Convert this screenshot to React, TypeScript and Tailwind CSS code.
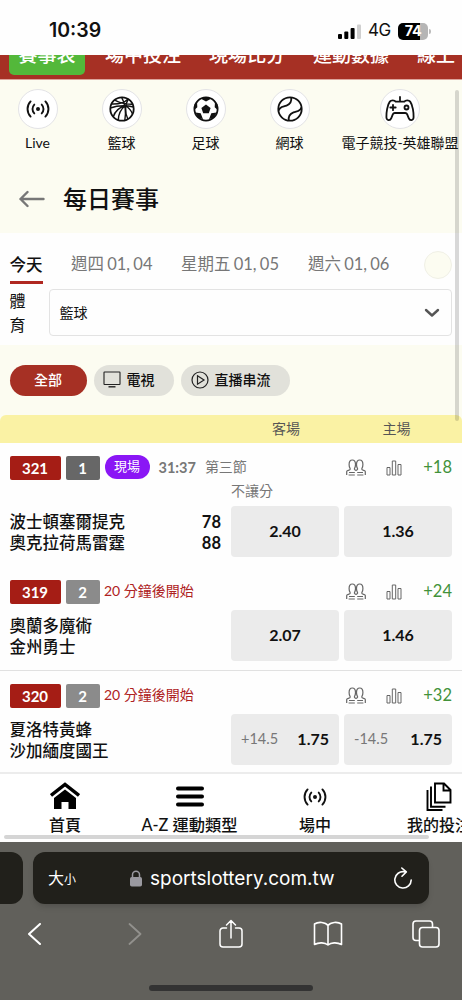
import React from "react";

type Game = {
  id: string;
  count: string;
  live?: boolean;
  status: string;
  period?: string;
  market?: string;
  teams: string[];
  scores?: string[];
  more: string;
  odds: { line?: string; value: string }[];
};

const games: Game[] = [
  {
    id: "321",
    count: "1",
    live: true,
    status: "31:37",
    period: "第三節",
    market: "不讓分",
    teams: ["波士頓塞爾提克", "奧克拉荷馬雷霆"],
    scores: ["78", "88"],
    more: "+18",
    odds: [{ value: "2.40" }, { value: "1.36" }],
  },
  {
    id: "319",
    count: "2",
    status: "20 分鐘後開始",
    teams: ["奧蘭多魔術", "金州勇士"],
    more: "+24",
    odds: [{ value: "2.07" }, { value: "1.46" }],
  },
  {
    id: "320",
    count: "2",
    status: "20 分鐘後開始",
    teams: ["夏洛特黃蜂", "沙加緬度國王"],
    more: "+32",
    odds: [
      { line: "+14.5", value: "1.75" },
      { line: "-14.5", value: "1.75" },
    ],
  },
];

function LiveIcon({ size = 24 }: { size?: number }) {
  return (
    <svg width={size} height={size} viewBox="0 0 24 24" fill="none" stroke="currentColor" strokeWidth="1.9" strokeLinecap="round">
      <circle cx="12" cy="12" r="2" fill="currentColor" stroke="none" />
      <path d="M8.300 7.600a6.300 6.300 0 0 0 0 8.800M15.700 7.600a6.300 6.300 0 0 1 0 8.800M4.600 4.400a11 11 0 0 0 0 15.200M19.400 4.400a11 11 0 0 1 0 15.200" />
    </svg>
  );
}

function BasketballIcon() {
  return (
    <svg width="26" height="26" viewBox="0 0 26 26" fill="none" stroke="currentColor" strokeWidth="1.4">
      <circle cx="13" cy="13" r="11.7" strokeWidth="1.8" />
      <path d="M12.500 1.200c3.800 6.500 4.600 15.500 3.300 23.300M19.300 3c-3.300 5-3.600 14-.5 20M1.300 12c8-2.800 15-3 23.300-1M2.400 8c7 .4 13-1.300 17-5.300M5.800 4.200c5 3 12 4.200 18 4M4.300 20.800c1.800-6 6.200-9.500 12-11.300M9.300 24c.2-6 2.700-11 7-14.500M16.300 9.500c3.500 2.200 6 5.200 7.200 8.500" />
    </svg>
  );
}

function SoccerIcon() {
  return (
    <svg width="26" height="26" viewBox="0 0 26 26" fill="none" stroke="currentColor" strokeWidth="1.8">
      <circle cx="13" cy="13" r="11.600" />
      <path fill="currentColor" stroke="none" d="M13 8.600l4.600 3.300-1.800 5.300h-5.600l-1.800-5.300z" />
      <path fill="currentColor" stroke="none" d="M7.500 2.600L13 5.400l5.500-2.800L13 1zM22 5.500l-.3 5.700 3.300 3-.6-6zM23.500 16.500l-5.200.8-2.300 6 5-1.800zM4 5.500l.3 5.700-3.300 3 .6-6zM2.500 16.500l5.200.8 2.300 6-5-1.800z" />
    </svg>
  );
}

function TennisIcon() {
  return (
    <svg width="26" height="26" viewBox="0 0 26 26" fill="none" stroke="currentColor" strokeWidth="1.8">
      <circle cx="13" cy="13" r="11.7" />
      <path d="M14.200 1.400c.6 4-1 6.800-4.700 8.200-3.600 1.300-7.200 1-7.800 5M11.800 24.600c-.6-4 1-6.800 4.700-8.200 3.600-1.300 7.200-1 7.800-5" />
    </svg>
  );
}

function GamepadIcon() {
  return (
    <svg width="30" height="26" viewBox="0 0 30 26" fill="none" stroke="currentColor" strokeWidth="1.800" strokeLinecap="round" strokeLinejoin="round">
      <path d="M15 5.300V1M15 5.600h4.300c1.200-1.600 4.700-1.600 5.900 0C27.700 9 28.800 17 28.600 21.300c-.2 3.500-3.800 3.700-4.900.9l-1.500-3.800c-.4-1-1-1.400-2-1.400H9.800c-1 0-1.600.4-2 1.400l-1.500 3.800c-1.100 2.800-4.700 2.600-4.900-.9C1.200 17 2.300 9 4.800 5.600c1.200-1.600 4.700-1.600 5.900 0z" />
      <path d="M5.300 11.500h5.400M8 8.800v5.400" />
      <circle cx="21.500" cy="11.500" r="2" />
    </svg>
  );
}

function PeopleIcon() {
  return (
    <svg width="20" height="17" viewBox="0 0 20 17" fill="none" stroke="currentColor" strokeWidth="1.200">
      <path d="M.7 16v-3.500c0-1.200 3.300-1 3.500-2.400.1-.9-1.100-1.600-1.100-4.700C3.100 2.400 4.200 1 6.300 1s3.200 1.400 3.200 4.400c0 3.100-1.200 3.800-1.100 4.700.2.800.9 1.100 1.600 1.300.7-.2 1.400-.5 1.600-1.300.1-.9-1.100-1.600-1.100-4.700C10.500 2.400 11.600 1 13.700 1s3.200 1.400 3.200 4.400c0 3.100-1.200 3.800-1.100 4.700.2 1.400 3.500 1.200 3.500 2.400V16" />
      <path d="M3 13.500h5.800M2.600 16h6.200M11.200 13.500H17M11.200 16h6.200" />
    </svg>
  );
}

function StatsIcon() {
  return (
    <svg width="16" height="16" viewBox="0 0 16 16" fill="none" stroke="currentColor" strokeWidth="1">
      <path d="M1 7.500h3v7.500H1zM6.300 1h3.400v14H6.300zM12 4.500h3V15h-3z" />
    </svg>
  );
}

function StatusBar() {
  return (
    <div className="h-[55px] shrink-0 flex items-center justify-between pl-[49px] pr-[31px] pt-[7px] bg-[#fefefe]">
      <span className="font-[Inter] text-[19.500px] font-semibold">10:39</span>
      <div className="flex items-center">
        <svg width="24" height="15" viewBox="0 0 24 15">
          <rect x="0" y="10" width="4" height="5" rx="1" />
          <rect x="6.300" y="7.500" width="4" height="7.500" rx="1" />
          <rect x="12.600" y="4" width="4" height="11" rx="1" />
          <rect x="19" y="0.500" width="4" height="14.500" rx="1" fill="#cfcfcf" />
        </svg>
        <span className="font-[Inter] text-[17px] w-[22px] ml-[6px] mr-[8px] tracking-[-0.5px]">4G</span>
        <div className="w-[30px] h-[17px] rounded-[5px] bg-linear-to-r from-black from-75% to-[#b5b5b5] to-75% flex items-center justify-center font-[Inter] text-white text-[14.500px] font-bold tracking-[-0.5px]">
          74
        </div>
        <div className="w-[2px] h-[5px] rounded-r-full bg-[#bbb] ml-px" />
      </div>
    </div>
  );
}

function TopNav() {
  return (
    <div className="h-[25px] shrink-0 overflow-hidden bg-[#a63024] border-b border-[#dca49b] text-white text-[19px] font-medium whitespace-nowrap">
      <div className="flex items-start -mt-[14px] leading-[28px]">
        <div className="bg-[#53b83a] rounded-[5px] h-[34px] w-[76px] ml-[9px] text-center">賽事表</div>
        <span className="ml-[20px]">場中投注</span>
        <span className="ml-[28px]">現場比分</span>
        <span className="ml-[28px]">運動數據</span>
        <span className="ml-[28px]">線上</span>
      </div>
    </div>
  );
}

function Sport({ label, children, className }: { label: string; children: React.ReactNode; className: string }) {
  return (
    <div className={`flex flex-col items-center shrink-0 ${className}`}>
      <div className="size-10 rounded-full border border-[#e3e3e6] bg-white flex items-center justify-center">{children}</div>
      <span className="mt-[4px] text-[14px] leading-5 whitespace-nowrap">{label}</span>
    </div>
  );
}

function GameRow({ game, last }: { game: Game; last?: boolean }) {
  return (
    <div className={`pl-[9.500px] pr-[10px] pt-[13px] bg-[#fefefe] ${game.live ? "h-[124px]" : last ? "h-[101px]" : "h-[104px] border-b border-[#e1e1e1]"}`}>
      <div className="flex items-center h-6 text-[14px]">
        <span className="w-[51px] h-[24px] rounded-[2px] bg-[#a51d15] text-white text-[15px] font-bold leading-[24px] text-center">{game.id}</span>
        <span className={`w-[34px] h-[24px] ml-[5px] rounded-[2px] text-white text-[15px] font-bold leading-[24px] text-center ${game.live ? "bg-[#676767]" : "bg-[#8b8b8b]"}`}>
          {game.count}
        </span>
        {game.live ? (
          <>
            <span className="w-[45px] h-[24px] ml-[5px] -mt-[2px] rounded-full bg-[#8a16f5] text-white text-[13px] leading-[23px] text-center">現場</span>
            <span className="ml-[9px] -mt-px text-[14.500px] font-bold text-[#777]">{game.status}</span>
            <span className="ml-[9px] -mt-[4px] text-[#777]">{game.period}</span>
          </>
        ) : (
          <span className="ml-[4.500px] -mt-[4px] text-[#ae2222]">{game.status}</span>
        )}
        <div className="ml-auto -mt-px flex items-center text-[#666]">
          <PeopleIcon />
          <div className="ml-[20px]">
            <StatsIcon />
          </div>
          <span className="w-[50px] text-right text-[16.500px] text-[#42923a]">{game.more}</span>
        </div>
      </div>
      <div className="h-[20px] pl-[221.500px] text-[14px] leading-[22px] text-[#777] empty:h-0">{game.market}</div>
      <div className="flex mt-[6px]">
        <div className="w-[211.500px] mr-[10px] pt-[5.500px] font-medium text-[16.500px] leading-[21.500px]">
          {game.teams.map((team, i) => (
            <div key={team} className="flex justify-between">
              <span>{team}</span>
              {game.scores && <span className="font-bold">{game.scores[i]}</span>}
            </div>
          ))}
        </div>
        <div className="flex gap-[5px]">
          {game.odds.map((odd, i) => (
            <div
              key={i}
              className={`w-[108px] h-[51px] pb-px rounded-[4px] bg-[#ebebeb] flex items-center ${odd.line ? "justify-between px-[10px]" : "justify-center"}`}
            >
              {odd.line && <span className="text-[14.500px] text-[#777]">{odd.line}</span>}
              <span className="text-[16px] font-bold">{odd.value}</span>
            </div>
          ))}
        </div>
      </div>
    </div>
  );
}

function BottomNav() {
  return (
    <div className="relative h-[70px] shrink-0 border-t-2 border-[#ececec] bg-white overflow-hidden">
      <div className="flex text-[16px] font-medium whitespace-nowrap pt-[8px]">
        <div className="w-[130px] shrink-0 flex flex-col items-center">
          <svg width="30" height="29" viewBox="0 0 30 29">
            <path d="M1 13.500L15 2.500l14 11" fill="none" stroke="#000" strokeWidth="3.400" />
            <path d="M4 16L15 7.500 26 16v11h-7.500v-7h-7v7H4z" />
          </svg>
          <span className="leading-[28px]">首頁</span>
        </div>
        <div className="w-[119px] shrink-0 flex flex-col items-center">
          <svg width="30" height="29" viewBox="0 0 30 29" stroke="#000" strokeWidth="4" strokeLinecap="round">
            <path d="M3 6.500h24M3 14.500h24M3 22.500h24" />
          </svg>
          <span className="leading-[28px] text-[16.300px]">A-Z 運動類型</span>
        </div>
        <div className="w-[132px] shrink-0 flex flex-col items-center">
          <div className="h-[29px] flex items-center">
            <LiveIcon size={24} />
          </div>
          <span className="leading-[28px]">場中</span>
        </div>
        <div className="w-[116px] shrink-0 flex flex-col items-center">
          <svg width="26" height="29" viewBox="0 0 26 29" fill="none" stroke="#000" strokeWidth="1.900">
            <path d="M9 1.500h9l6.500 6.500v12.500H9zM17.500 1.500V8.500h7M5 4.500v20.200h14.500M1.500 8v20h15" />
          </svg>
          <span className="leading-[28px]">我的投注</span>
        </div>
      </div>
      <div className="absolute left-[4px] bottom-[3px] w-[425px] h-[4px] rounded-full bg-[#d5d5d5]" />
    </div>
  );
}

function BrowserBar() {
  return (
    <div className="h-[158px] shrink-0 bg-[#61605b] text-white overflow-hidden">
      <div className="flex gap-[10px] mt-[10px]">
        <div className="w-[23px] h-[52px] rounded-r-[12px] bg-[#21201b]" />
        <div className="w-[396px] h-[52px] rounded-[12px] bg-[#21201b] shadow-md flex items-center pl-[15px] pr-[16px]">
          <span className="text-[16px]">大</span>
          <span className="text-[12px] mt-[4px]">小</span>
          <svg className="ml-[54px]" width="12" height="17" viewBox="0 0 12 17">
            <rect x="0" y="7" width="12" height="9.500" rx="1.800" fill="#9a99a0" />
            <path d="M2.500 8V4.800a3.500 3.500 0 0 1 7 0V8" fill="none" stroke="#9a99a0" strokeWidth="1.500" />
          </svg>
          <span className="ml-[8px] mt-[2px] font-[Inter] text-[19px]">sportslottery.com.tw</span>
          <svg className="ml-auto" width="20" height="22" viewBox="0 0 20 22" fill="none" stroke="#fff" strokeWidth="1.600" strokeLinecap="round" strokeLinejoin="round">
            <path d="M11.500 4.800A8.200 8.200 0 1 0 18.200 13M8.800 1l4.500 3.900-4.300 4.300" />
          </svg>
        </div>
      </div>
      <div className="flex items-center justify-between pl-[20px] pr-[21px] mt-[14px] h-[32px]">
        <svg width="30" height="22" viewBox="0 0 30 22" fill="none" stroke="#fff" strokeWidth="2" strokeLinecap="round" strokeLinejoin="round">
          <path d="M20 1L9 11l11 10" />
        </svg>
        <svg width="30" height="22" viewBox="0 0 30 22" fill="none" stroke="#92918d" strokeWidth="1.800" strokeLinecap="round" strokeLinejoin="round">
          <path d="M11.500 1l11 10-11 10" />
        </svg>
        <svg width="30" height="30" viewBox="-3 0 30 30" fill="none" stroke="#fff" strokeWidth="1.500" strokeLinecap="round" strokeLinejoin="round">
          <path d="M7.500 9H4a3 3 0 0 0-3 3v13a3 3 0 0 0 3 3h16a3 3 0 0 0 3-3V12a3 3 0 0 0-3-3h-3.500M12 19V1.500M7.500 6L12 1.500 16.500 6" />
        </svg>
        <svg width="30" height="26" viewBox="0 0 30 26" fill="none" stroke="#fff" strokeWidth="1.600" strokeLinejoin="round">
          <path d="M15 4.500C12.500 1 5.500.300 1.500 3v20.500c4.500-2.500 10.500-2 13.500.500 3-2.500 9-3 13.500-.500V3C24.500.300 17.500 1 15 4.500zM15 4.500V24" />
        </svg>
        <svg width="30" height="28" viewBox="-1 0 30 28" fill="none" stroke="#fff" strokeWidth="1.600">
          <rect x="7.500" y="7.500" width="19.500" height="19.500" rx="3" />
          <path d="M7.500 20.500H4a3 3 0 0 1-3-3V4a3 3 0 0 1 3-3h13.500a3 3 0 0 1 3 3v3.500" />
        </svg>
      </div>
      <div className="w-[164px] h-[6px] rounded-full bg-[#333] mx-auto mt-[35px]" />
    </div>
  );
}

export default function App() {
  return (
    <div className="relative w-[462px] h-[1000px] overflow-hidden flex flex-col bg-white text-[#111] font-[Lato,'Noto_Sans_CJK_TC',sans-serif]">
      <StatusBar />
      <TopNav />
      <div className="h-[153px] shrink-0 bg-[#fcfcf1] overflow-hidden">
        <div className="flex pt-[9px]">
          <Sport label="Live" className="w-[75px]">
            <LiveIcon />
          </Sport>
          <Sport label="籃球" className="w-[93px]">
            <BasketballIcon />
          </Sport>
          <Sport label="足球" className="w-[75px]">
            <SoccerIcon />
          </Sport>
          <Sport label="網球" className="w-[93px]">
            <TennisIcon />
          </Sport>
          <Sport label="電子競技-英雄聯盟" className="w-[128px]">
            <GamepadIcon />
          </Sport>
        </div>
        <div className="flex items-center mt-[28px] pl-[19px] h-[36px]">
          <svg width="26" height="18" viewBox="0 0 26 18" fill="none" stroke="#777" strokeWidth="2.400" strokeLinecap="round" strokeLinejoin="round">
            <path d="M24.500 9H1.500M8.500 2L1.500 9l7 7" />
          </svg>
          <h1 className="ml-[18px] text-[24px] font-medium">每日賽事</h1>
        </div>
      </div>
      <div className="h-[112px] shrink-0 bg-[#fefefe] pl-[9.500px] pr-[10px]">
        <div className="flex items-center h-[51px] pt-[12px] text-[16.500px] text-[#777] whitespace-nowrap [word-spacing:-1px]">
          <div className="h-[39px] w-[33px] leading-[40px] border-b-[3px] border-[#b02821] text-[#111] font-medium">今天</div>
          <span className="ml-[28.500px]">週四 01, 04</span>
          <span className="ml-[28.500px]">星期五 01, 05</span>
          <span className="ml-[29px]">週六 01, 06</span>
          <div className="ml-auto size-7 rounded-full bg-[#fcfcf1] border border-[#f0f0e6]" />
        </div>
        <div className="flex mt-[5px]">
          <div className="w-[40px] pr-[23px] text-[16px] leading-6">體育</div>
          <div className="w-[403px] h-[47px] rounded-[4px] border border-[#e3e3e3] flex items-center justify-between pl-[9px] pr-[11px] text-[14px]">
            <span>籃球</span>
            <svg width="16" height="10" viewBox="0 0 16 10" fill="none" stroke="#555" strokeWidth="2.400" strokeLinecap="round" strokeLinejoin="round">
              <path d="M2 2l6 5.500L14 2" />
            </svg>
          </div>
        </div>
      </div>
      <div className="h-[70px] shrink-0 bg-[#fcfcf1] flex gap-[7px] px-[9.500px] pt-[20px] text-[14px] font-medium">
        <div className="w-[77px] h-[31px] pb-[2px] rounded-full bg-[#a63024] text-white flex items-center justify-center">全部</div>
        <div className="w-[80px] h-[31px] pb-[2px] rounded-full bg-[#e1e1da] flex items-center pl-[9px] gap-[6px]">
          <svg width="18" height="17" viewBox="0 0 18 17" fill="none" stroke="#222" strokeWidth="1.100">
            <rect x="1" y="1" width="16" height="12.500" rx="0.500" />
            <path d="M5.500 15.800h7" strokeWidth="1.400" />
          </svg>
          電視
        </div>
        <div className="w-[109px] h-[31px] pb-[2px] rounded-full bg-[#e1e1da] flex items-center pl-[10px] gap-[6px]">
          <svg width="18" height="18" viewBox="0 0 18 18" fill="none" stroke="#222" strokeWidth="1.200">
            <circle cx="9" cy="9" r="8" />
            <path d="M6.500 4.800L13 9l-6.500 4.200z" />
          </svg>
          直播串流
        </div>
      </div>
      <div className="h-[28px] shrink-0 bg-[#fcfcf1]">
        <div className="h-full rounded-t-[6px] bg-[#faf2a4] flex items-center pl-[231px] pb-[2px] text-[14px] text-[#555]">
          <span className="w-[110px] text-center">客場</span>
          <span className="w-[111px] text-center">主場</span>
        </div>
      </div>
      <div className="h-[329px] shrink-0 overflow-hidden">
        {games.map((game, i) => (
          <GameRow key={game.id} game={game} last={i === games.length - 1} />
        ))}
      </div>
      <BottomNav />
      <BrowserBar />
      <div className="absolute left-[455px] top-[90px] w-[4px] h-[331px] rounded-full bg-black/15" />
    </div>
  );
}
